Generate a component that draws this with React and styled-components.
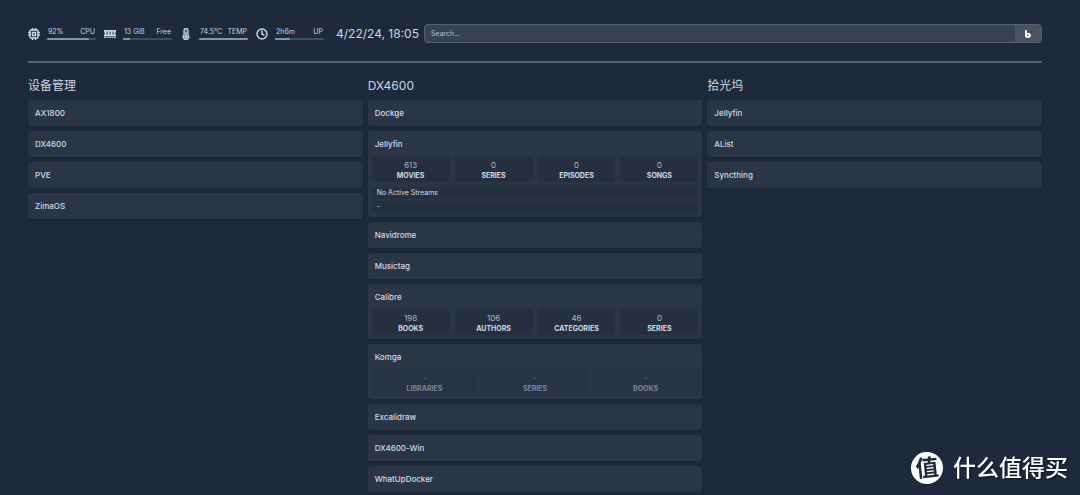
import React from 'react';
import styled, { createGlobalStyle } from 'styled-components';
import { FiCpu, FiClock } from 'react-icons/fi';

const MemoryIcon = ({ size }) => (
  <svg width={size} height={size} viewBox="0 0 24 24" fill="currentColor">
    <path d="M0 4h24v5a2 2 0 0 0 0 4v3H0v-3a2 2 0 0 0 0-4z" />
    <path d="M0 17h24v3H0z" opacity="0.85" />
    <path d="M5 7h2v6H5zM11 7h2v6h-2zM17 7h2v6h-2z" fill="#1e293b" />
    <path d="M4 18h1v2H4zM9 18h1v2H9zM14 18h1v2h-1zM19 18h1v2h-1z" fill="#1e293b" />
  </svg>
);

const ThermometerIcon = ({ size }) => (
  <svg width={size} height={size} viewBox="0 0 24 24" fill="none">
    <path
      d="M8 5a4 4 0 0 1 8 0v9a5.500 5.500 0 1 1-8 0z"
      fill="#5d6979"
      stroke="currentColor"
      strokeWidth="2.500"
    />
    <path d="M12 9v9" stroke="currentColor" strokeWidth="2.500" strokeLinecap="round" />
    <circle cx="12" cy="18" r="3.200" fill="currentColor" />
  </svg>
);

const resources = [
  { icon: FiCpu, value: '92%', label: 'CPU', percent: 86 },
  { icon: MemoryIcon, value: '13 GiB', label: 'Free', percent: 15 },
  { icon: ThermometerIcon, value: '74.5°C', label: 'TEMP', percent: 100 },
  { icon: FiClock, value: '2h6m', label: 'UP', percent: 31 },
];

const groups = [
  {
    title: '设备管理',
    services: [{ name: 'AX1800' }, { name: 'DX4600' }, { name: 'PVE' }, { name: 'ZimaOS' }],
  },
  {
    title: 'DX4600',
    services: [
      { name: 'Dockge' },
      {
        name: 'Jellyfin',
        stats: [['613', 'MOVIES'], ['0', 'SERIES'], ['0', 'EPISODES'], ['0', 'SONGS']],
        streams: ['No Active Streams', '-'],
      },
      { name: 'Navidrome' },
      { name: 'Musictag' },
      {
        name: 'Calibre',
        stats: [['198', 'BOOKS'], ['106', 'AUTHORS'], ['46', 'CATEGORIES'], ['0', 'SERIES']],
      },
      {
        name: 'Komga',
        loading: true,
        stats: [['-', 'LIBRARIES'], ['-', 'SERIES'], ['-', 'BOOKS']],
      },
      { name: 'Excalidraw' },
      { name: 'DX4600-Win' },
      { name: 'WhatUpDocker' },
    ],
  },
  {
    title: '拾光坞',
    services: [{ name: 'Jellyfin' }, { name: 'AList' }, { name: 'Syncthing' }],
  },
];

const Resource = ({ icon: Icon, value, label, percent }) => (
  <ResourceBox>
    <Icon size={12} strokeWidth={3} />
    <Usage>
      <UsageText>
        <span>{value}</span>
        <span>{label}</span>
      </UsageText>
      <Track>
        <Fill style={{ width: `${percent}%` }} />
      </Track>
    </Usage>
  </ResourceBox>
);

const Service = ({ name, stats, streams, loading }) => (
  <Card>
    <ServiceName href="#">{name}</ServiceName>
    {stats && (
      <Stats>
        {stats.map(([value, label]) => (
          <Stat key={label} $loading={loading}>
            <StatValue>{value}</StatValue>
            <StatLabel>{label}</StatLabel>
          </Stat>
        ))}
      </Stats>
    )}
    {streams && (
      <Streams>
        {streams.map((stream) => (
          <Stream key={stream}>{stream}</Stream>
        ))}
      </Streams>
    )}
  </Card>
);

const App = () => {
  return (
    <Page>
      <GlobalStyle />
      <Header>
        <Resources>
          {resources.map((item) => (
            <Resource key={item.label} {...item} />
          ))}
        </Resources>
        <DateTime>4/22/24, 18:05</DateTime>
        <Search>
          <SearchInput type="text" placeholder="Search…" aria-label="Search" />
          <SearchButton type="button" aria-label="Bing">
            <svg width="6" height="8" viewBox="0 0 12 16" fill="currentColor">
              <path d="M0 0l4 1v4.500L9 6l3 3v3l-3 3.500L4 16l-4-2.500zM4 9v3l3-1V9.500z" />
            </svg>
          </SearchButton>
        </Search>
      </Header>
      <Groups>
        {groups.map((group) => (
          <section key={group.title}>
            <GroupTitle>{group.title}</GroupTitle>
            <List>
              {group.services.map((service) => (
                <Service key={service.name} {...service} />
              ))}
            </List>
          </section>
        ))}
      </Groups>
      <Watermark>
        <Badge>值</Badge>
        <span>什么值得买</span>
      </Watermark>
    </Page>
  );
};

export default App;

const GlobalStyle = createGlobalStyle`
  * {
    box-sizing: border-box;
  }
  body {
    margin: 0;
    background-color: #1e293b;
    color: #cbd5e1;
    font-family: Inter, 'Noto Sans CJK SC', sans-serif;
  }
`;

const Page = styled.main`
  padding: 24px 38px 0 28px;
`;

const Header = styled.header`
  display: flex;
  align-items: center;
  padding-bottom: 18px;
  border-bottom: 2px solid #55636f;
`;

const Resources = styled.div`
  display: flex;
  gap: 8px;
`;

const ResourceBox = styled.div`
  display: flex;
  align-items: center;
  gap: 7px;
`;

const Usage = styled.div`
  width: 49px;
`;

const UsageText = styled.div`
  display: flex;
  justify-content: space-between;
  padding: 0 1px;
  font-size: 7px;
  line-height: 10px;
  white-space: nowrap;
`;

const Track = styled.div`
  height: 2px;
  margin-top: 1px;
  border-radius: 1px;
  background-color: #414e5d;
`;

const Fill = styled.div`
  height: 2px;
  border-radius: 1px;
  background-color: #8795a1;
`;

const DateTime = styled.time`
  width: 88px;
  margin-left: 12px;
  font-size: 12px;
  line-height: 19px;
  white-space: nowrap;
`;

const Search = styled.div`
  display: flex;
  flex: 1;
  height: 19px;
  border: 1px solid #55636f;
  border-radius: 4px;
  background-color: #394252;
  overflow: hidden;
`;

const SearchInput = styled.input`
  flex: 1;
  min-width: 0;
  padding: 0 6px;
  border: 0;
  background: none;
  color: #e2e8f0;
  font-family: inherit;
  font-size: 7px;
  outline: none;
  &::placeholder {
    color: #b4bdc9;
    opacity: 1;
  }
`;

const SearchButton = styled.button`
  display: flex;
  align-items: center;
  justify-content: center;
  width: 26px;
  padding: 0;
  border: 0;
  background-color: #4b5361;
  color: #fff;
`;

const Groups = styled.div`
  display: grid;
  grid-template-columns: repeat(3, 1fr);
  gap: 5px;
  padding-top: 14px;
`;

const GroupTitle = styled.h2`
  margin: 0 0 5px;
  font-size: 12px;
  font-weight: 400;
  line-height: 18px;
`;

const List = styled.ul`
  display: flex;
  flex-direction: column;
  gap: 5px;
  margin: 0;
  padding: 0;
  list-style: none;
`;

const Card = styled.li`
  border-radius: 3px;
  background-color: #2a3545;
  box-shadow: 0 1px 2px rgba(15, 23, 42, 0.2);
`;

const ServiceName = styled.a`
  display: block;
  padding: 0 7px;
  color: #d3dbe5;
  font-size: 8px;
  font-weight: 500;
  line-height: 26px;
  text-decoration: none;
`;

const Stats = styled.div`
  display: flex;
  gap: 5px;
  padding: 0 4px 4px;
  margin-top: -1px;
`;

const Stat = styled.div`
  flex: 1;
  padding: 4px 0 2px;
  border-radius: 3px;
  background-color: ${(props) => (props.$loading ? '#283343' : '#252f40')};
  color: ${(props) => (props.$loading ? '#7c8795' : '#d3dbe5')};
  text-align: center;
`;

const StatValue = styled.div`
  font-size: 8px;
  font-weight: 300;
  line-height: 11px;
`;

const StatLabel = styled.div`
  font-size: 7px;
  font-weight: 700;
  line-height: 9px;
`;

const Streams = styled.div`
  display: flex;
  flex-direction: column;
  gap: 2px;
  padding: 1px 4px 4px;
`;

const Stream = styled.div`
  padding: 0 5px;
  border-radius: 3px;
  background-color: #252f40;
  color: #d3dbe5;
  font-size: 7px;
  line-height: 12px;
`;

const Watermark = styled.div`
  position: fixed;
  right: 12px;
  bottom: 11px;
  display: flex;
  align-items: center;
  gap: 10px;
  color: #fff;
  font-size: 23px;
  font-weight: 500;
  line-height: 32px;
  text-shadow: 1px 1px 2px #0f172a;
`;

const Badge = styled.span`
  width: 32px;
  border-radius: 50%;
  background-color: #fff;
  color: #1e293b;
  font-weight: 700;
  text-align: center;
  text-shadow: none;
  transform: rotate(-6deg);
`;
